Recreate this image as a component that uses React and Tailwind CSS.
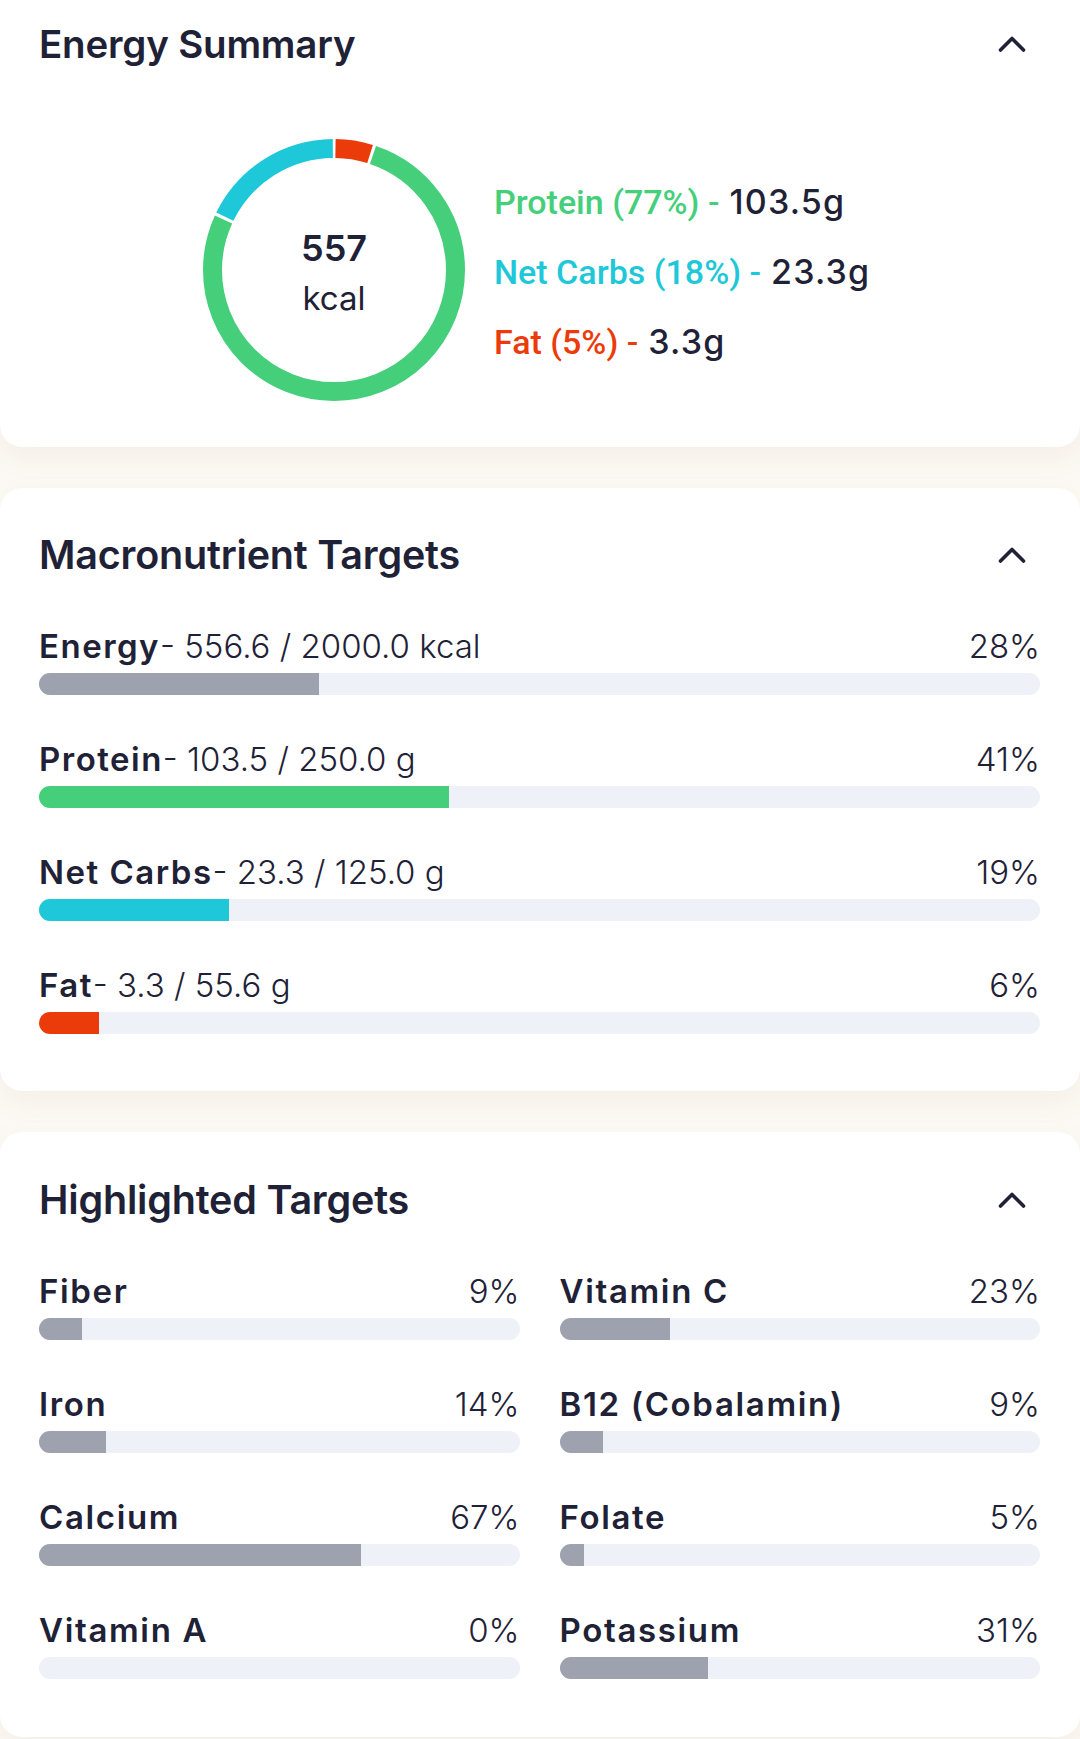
import React from "react";

const FONT = { fontFamily: "Inter, 'Noto Sans', sans-serif" };
const ROBOTO = { fontFamily: "Roboto, 'Noto Sans', sans-serif" };

function Chevron() {
  return (
    <svg width="28" height="16" viewBox="0 0 28 16" fill="none">
      <polyline
        points="2.5,14 14,2.5 25.5,14"
        stroke="#1f2236"
        strokeWidth="3.6"
        strokeLinecap="round"
        strokeLinejoin="round"
      />
    </svg>
  );
}

function Header({ title, size = "text-[39.5px]" }) {
  return (
    <div className="flex items-center justify-between h-[46px]">
      <h2 className={`${size} leading-[46px] font-semibold text-[#1f2236] tracking-[-0.005em]`}>{title}</h2>
      <div className="mr-[14px] flex items-center">
        <Chevron />
      </div>
    </div>
  );
}

function Bar({ pct, color }) {
  return (
    <div className="mt-[7px] h-[22px] w-full rounded-full bg-[#eef1f8] overflow-hidden">
      <div className="h-full" style={{ width: `${pct}%`, backgroundColor: color }} />
    </div>
  );
}

function Donut() {
  const r = 121.5;
  const C = 2 * Math.PI * r;
  const gap = 3;
  const segs = [
    { c: "#ec3b0b", s: 0.0, p: 0.05 },
    { c: "#45cf7b", s: 0.05, p: 0.77 },
    { c: "#1ec8d8", s: 0.82, p: 0.18 },
  ];
  return (
    <div className="relative w-[262px] h-[262px] shrink-0">
      <svg width="262" height="262" viewBox="0 0 262 262" className="-rotate-90">
        {segs.map((s, i) => (
          <circle
            key={i}
            cx="131"
            cy="131"
            r={r}
            fill="none"
            stroke={s.c}
            strokeWidth="19"
            strokeDasharray={`${s.p * C - gap} ${C}`}
            strokeDashoffset={-(s.s * C + gap / 2)}
          />
        ))}
      </svg>
      <div className="absolute inset-0 flex flex-col items-center justify-center text-[#1f2236]">
        <div className="text-[36px] leading-[44px] font-semibold mt-[4px]">557</div>
        <div className="text-[33px] leading-[40px] font-normal mt-[8px]">kcal</div>
      </div>
    </div>
  );
}

function LegendRow({ label, color, value }) {
  return (
    <div className="flex items-center h-[40px] text-[34px] leading-[40px]">
      <span style={{ ...ROBOTO, color }} className="font-medium">
        {label} -
      </span>
      <span className="ml-[10px] font-medium text-[#1f2236] tracking-[0.035em]">{value}</span>
    </div>
  );
}

function MacroRow({ name, detail, pct, color }) {
  return (
    <div>
      <div className="flex items-center justify-between h-[40px] text-[33px] leading-[40px] text-[#1f2236]">
        <div>
          <span className="font-semibold tracking-[0.045em]">{name}</span>
          <span className="font-light">- {detail}</span>
        </div>
        <span className="font-light">{pct}%</span>
      </div>
      <Bar pct={pct} color={color} />
    </div>
  );
}

function TargetRow({ name, pct }) {
  return (
    <div>
      <div className="flex items-center justify-between h-[40px] text-[33px] leading-[40px] text-[#1f2236]">
        <span className="font-semibold tracking-[0.05em]">{name}</span>
        <span className="font-light">{pct}%</span>
      </div>
      <Bar pct={pct} color="#9ea2ae" />
    </div>
  );
}

export default function App() {
  const cardShadow = "shadow-[0_10px_28px_rgba(150,120,70,0.08)]";
  return (
    <div style={FONT} className="w-[1080px] min-h-[1739px] bg-[#fcf9f4] overflow-hidden">
      {/* Energy Summary */}
      <section className={`bg-white rounded-b-[22px] ${cardShadow} pl-[39px] pr-[40px] pt-[21px] pb-[46px]`}>
        <Header title="Energy Summary" size="text-[38.5px]" />
        <div className="mt-[72px] flex items-center pl-[164px]">
          <Donut />
          <div className="ml-[29px] flex flex-col gap-[30px] mt-[4px]">
            <LegendRow label="Protein (77%)" color="#45cf7b" value="103.5g" />
            <LegendRow label="Net Carbs (18%)" color="#1ec8d8" value="23.3g" />
            <LegendRow label="Fat (5%)" color="#ec3b0b" value="3.3g" />
          </div>
        </div>
      </section>

      {/* Macronutrient Targets */}
      <section className={`mt-[41px] bg-white rounded-[22px] ${cardShadow} pl-[39px] pr-[40px] pt-[44px] pb-[57px]`}>
        <Header title="Macronutrient Targets" />
        <div className="mt-[48px] flex flex-col gap-[44px]">
          <MacroRow name="Energy" detail="556.6 / 2000.0 kcal" pct={28} color="#9ea2ae" />
          <MacroRow name="Protein" detail="103.5 / 250.0 g" pct={41} color="#45cf7b" />
          <MacroRow name="Net Carbs" detail="23.3 / 125.0 g" pct={19} color="#1ec8d8" />
          <MacroRow name="Fat" detail="3.3 / 55.6 g" pct={6} color="#ec3b0b" />
        </div>
      </section>

      {/* Highlighted Targets */}
      <section className={`mt-[41px] bg-white rounded-[22px] ${cardShadow} pl-[39px] pr-[40px] pt-[45px] pb-[58px]`}>
        <Header title="Highlighted Targets" />
        <div className="mt-[48px] grid grid-cols-2 gap-x-[40px] gap-y-[44px]">
          <TargetRow name="Fiber" pct={9} />
          <TargetRow name="Vitamin C" pct={23} />
          <TargetRow name="Iron" pct={14} />
          <TargetRow name="B12 (Cobalamin)" pct={9} />
          <TargetRow name="Calcium" pct={67} />
          <TargetRow name="Folate" pct={5} />
          <TargetRow name="Vitamin A" pct={0} />
          <TargetRow name="Potassium" pct={31} />
        </div>
      </section>
    </div>
  );
}
